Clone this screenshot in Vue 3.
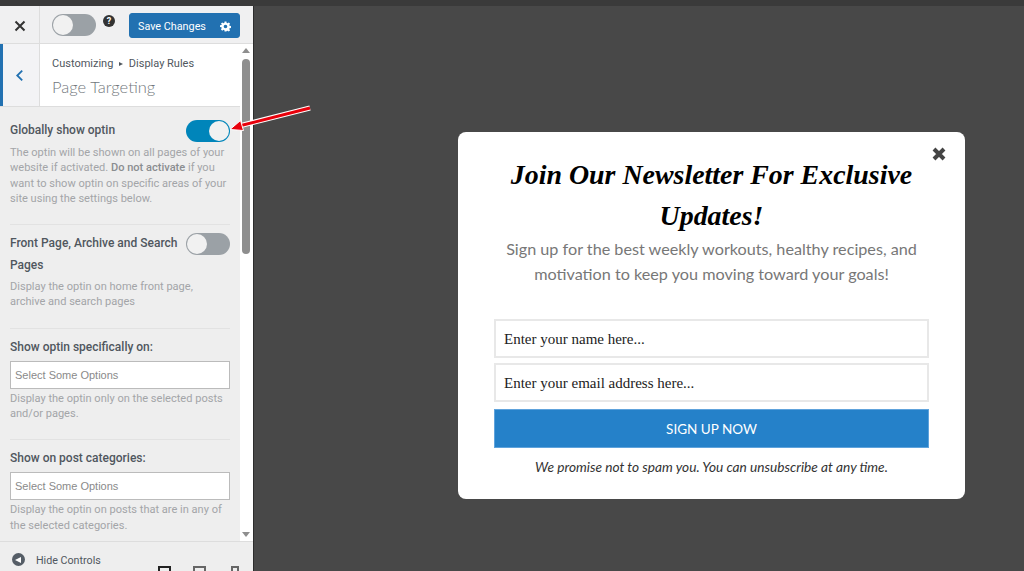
<script setup>
const rules = [
  {
    label: "Globally show optin",
    toggle: "on",
    desc: 'The optin will be shown on all pages of your website if activated. <b>Do not activate</b> if you want to show optin on specific areas of your site using the settings below.'
  },
  {
    label: "Front Page, Archive and Search Pages",
    toggle: "off",
    desc: "Display the optin on home front page, archive and search pages",
    pad: true
  },
  {
    label: "Show optin specifically on:",
    select: true,
    desc: "Display the optin only on the selected posts and/or pages."
  },
  {
    label: "Show on post categories:",
    select: true,
    desc: "Display the optin on posts that are in any of the selected categories."
  }
];
</script>

<template>
  <div class="page">
    <div class="topbar"></div>
    <div class="body">
      <aside class="sidebar">
        <header class="actions">
          <div class="close">
            <svg width="12" height="12" viewBox="0 0 12 12"><path d="M1.500 1.500l9 9M10.500 1.500l-9 9" stroke="#333" stroke-width="2" fill="none" /></svg>
          </div>
          <div class="toggle off small"><span class="knob"></span></div>
          <div class="help">?</div>
          <button class="save">
            <span>Save Changes</span>
            <svg width="11" height="11" viewBox="0 0 24 24"><path fill="#fff" fill-rule="evenodd" d="M10 1h4l.6 3.100 1.900.8L19.200 3 22 5.800l-1.900 2.700.8 1.900 3.100.6v4l-3.100.6-.8 1.900 1.900 2.700-2.800 2.800-2.700-1.900-1.900.8L14 23h-4l-.6-3.100-1.900-.8L4.800 21 2 18.200l1.900-2.700-.8-1.900L0 13V9.500l3.100-.6.8-1.900L2 5.800 4.800 3l2.700 1.900 1.900-.8zM12 8a4 4 0 100 8 4 4 0 000-8z"/></svg>
          </button>
        </header>

        <div class="middle">
          <div class="column">
            <div class="panel-title">
              <div class="back">
                <svg width="9" height="13" viewBox="0 0 10 14"><path d="M8 1.500L2.500 7 8 12.500" stroke="#2271b1" stroke-width="2" fill="none" /></svg>
              </div>
              <div class="crumbs">
                <div class="crumb">Customizing <i class="tri"></i> Display Rules</div>
                <div class="title">Page Targeting</div>
              </div>
            </div>
            <div class="rules">
              <section v-for="rule in rules" :key="rule.label" class="rule" :class="{ padded: rule.pad, 'with-select': rule.select }">
                <div class="label-row">
                  <div v-if="rule.toggle" class="toggle" :class="rule.toggle"><span class="knob"></span></div>
                  <span class="label">{{ rule.label }}</span>
                </div>
                <div v-if="rule.select" class="select">Select Some Options</div>
                <p class="desc" v-html="rule.desc"></p>
              </section>
            </div>
          </div>
          <div class="scrollbar">
            <i class="arrow up"></i>
            <div class="thumb"></div>
            <i class="arrow down"></i>
          </div>
        </div>

        <footer class="controls">
          <span class="hide-icon"><i></i></span>
          <span class="hide-text">Hide Controls</span>
          <div class="devices">
            <i class="device active"></i>
            <i class="device"></i>
            <i class="device narrow"></i>
          </div>
        </footer>
      </aside>

      <main class="stage">
        <div class="popup">
          <svg class="popup-close" width="16" height="16" viewBox="0 0 16 16"><path d="M3 3l10 10M13 3L3 13" stroke="#444" stroke-width="4" fill="none" /></svg>
          <h1>Join Our Newsletter For Exclusive Updates!</h1>
          <p class="sub">Sign up for the best weekly workouts, healthy recipes, and motivation to keep you moving toward your goals!</p>
          <div class="field">Enter your name here...</div>
          <div class="field">Enter your email address here...</div>
          <button class="signup">SIGN UP NOW</button>
          <p class="note">We promise not to spam you. You can unsubscribe at any time.</p>
        </div>
      </main>
    </div>

    <svg class="pointer" width="90" height="32" viewBox="0 0 90 32">
      <path d="M84 3L13 21" stroke="#fff" stroke-width="5" fill="none" />
      <path d="M84 3L13 21" stroke="#e8000b" stroke-width="3" fill="none" />
      <path d="M4 24.500L14.500 15.500l3 10z" fill="#e8000b" stroke="#fff" stroke-width="1" />
    </svg>
  </div>
</template>

<style>
html, body {
  margin: 0;
  overflow: hidden;
}
</style>

<style scoped>
.page {
  position: relative;
  width: 1024px;
  height: 571px;
  overflow: hidden;
  background: #484848;
  font-family: Roboto, sans-serif;
}
.topbar {
  height: 6px;
  background: #3a3a3a;
}
.body {
  display: flex;
  height: 565px;
}
.sidebar {
  width: 253px;
  flex: none;
  display: flex;
  flex-direction: column;
  background: #eee;
  border-right: 1px solid #2c2c2c;
  overflow: hidden;
}
.actions {
  height: 38px;
  flex: none;
  display: flex;
  align-items: flex-start;
  box-sizing: border-box;
  border-bottom: 1px solid #ddd;
  background: #f0f0f1;
}
.close {
  width: 40px;
  height: 37px;
  flex: none;
  display: flex;
  align-items: center;
  justify-content: center;
  border-right: 1px solid #ddd;
  box-sizing: border-box;
  padding-top: 2px;
}
.toggle {
  width: 44px;
  height: 22px;
  flex: none;
  box-sizing: border-box;
  border-radius: 11px;
  display: flex;
  align-items: center;
  padding: 0 1px;
}
.toggle.on {
  background: #0085ba;
  justify-content: flex-end;
}
.toggle.off {
  background: #9ba1a6;
}
.toggle .knob {
  width: 20px;
  height: 20px;
  border-radius: 50%;
  background: #f1f1f1;
}
.toggle.small {
  margin: 8px 0 0 12px;
}
.help {
  width: 12px;
  height: 12px;
  flex: none;
  margin: 9px 0 0 7px;
  border-radius: 50%;
  background: #333;
  color: #fff;
  font-size: 9px;
  font-weight: 700;
  line-height: 12px;
  text-align: center;
}
.save {
  width: 111px;
  height: 25px;
  margin: 7px 0 0 14px;
  padding: 2px 8px 0 8px;
  display: flex;
  align-items: center;
  justify-content: space-between;
  border: 1px solid #2271b1;
  border-radius: 3px;
  background: #2271b1;
  color: #fff;
  font-family: Roboto, sans-serif;
  font-size: 10.800px;
  box-sizing: border-box;
}
.middle {
  flex: 1;
  min-height: 0;
  display: flex;
  overflow: hidden;
}
.column {
  width: 240px;
  flex: none;
  overflow: hidden;
}
.panel-title {
  height: 63px;
  display: flex;
  background: #fff;
  border-bottom: 1px solid #ddd;
  box-sizing: border-box;
}
.back {
  width: 40px;
  flex: none;
  display: flex;
  align-items: center;
  justify-content: center;
  box-sizing: border-box;
  padding-right: 3px;
  border-left: 3px solid #2271b1;
  border-right: 1px solid #ddd;
  background: #f3f3f5;
}
.crumbs {
  padding: 10px 0 0 12px;
}
.crumb {
  color: #50575e;
  font-size: 11px;
  line-height: 20px;
}
.tri {
  display: inline-block;
  margin: 0 3px 1px;
  border-left: 4px solid #50575e;
  border-top: 2.500px solid transparent;
  border-bottom: 2.500px solid transparent;
}
.title {
  color: #72777c;
  font-family: Lato, sans-serif;
  font-size: 16.500px;
  font-weight: 300;
  line-height: 26px;
}
.rules {
  padding: 13px 10px 0;
}
.rule {
  padding-bottom: 18px;
  margin-bottom: 8px;
  border-bottom: 1px solid #e2e2e2;
}
.rule:last-child {
  border-bottom: none;
}
.label-row {
  margin-top: -1px;
  color: #50575e;
  font-size: 12px;
  font-weight: 500;
  line-height: 22px;
}
.label-row .toggle {
  float: right;
  margin: 1px 0 0 2px;
}
.select {
  height: 28px;
  box-sizing: border-box;
  margin-top: 3px;
  padding-left: 4px;
  border: 1px solid #bbb;
  background: #fff;
  color: #8a8a8a;
  font-family: "Liberation Sans", sans-serif;
  font-size: 11px;
  line-height: 26px;
}
.desc {
  margin: 4px 0 0;
  color: #a3a5a8;
  font-size: 11.050px;
  line-height: 15.300px;
}
.padded .desc {
  margin-top: 3px;
}
.with-select .desc {
  margin-top: 2px;
}
.desc :deep(b) {
  font-weight: 500;
  color: #8a8d90;
}
.scrollbar {
  position: relative;
  width: 13px;
  flex: none;
  background: #fff;
}
.thumb {
  width: 8px;
  height: 195px;
  margin: 15px 0 0 2px;
  border-radius: 4px;
  background: #8e8e8e;
}
.arrow {
  position: absolute;
  left: 2px;
  border-left: 4px solid transparent;
  border-right: 4px solid transparent;
}
.arrow.up {
  top: 4px;
  border-bottom: 5px solid #8e8e8e;
}
.arrow.down {
  bottom: 4px;
  border-top: 5px solid #8e8e8e;
}
.controls {
  height: 30px;
  flex: none;
  position: relative;
  border-top: 1px solid #ddd;
  box-sizing: border-box;
  display: flex;
  align-items: flex-start;
  padding: 11px 0 0 12px;
  overflow: hidden;
}
.hide-icon {
  width: 13px;
  height: 13px;
  border-radius: 50%;
  background: #555d66;
  display: flex;
  align-items: center;
  justify-content: center;
}
.hide-icon i {
  border-right: 6px solid #fff;
  border-top: 3.500px solid transparent;
  border-bottom: 3.500px solid transparent;
  margin-right: 2px;
}
.hide-text {
  margin-left: 11px;
  color: #50575e;
  font-size: 10.700px;
  line-height: 16px;
}
.devices {
  position: absolute;
  left: 158px;
  top: 24px;
  display: flex;
  gap: 22px;
}
.device {
  width: 13px;
  height: 10px;
  box-sizing: border-box;
  border: 2px solid #666;
}
.device.active {
  border-color: #222;
}
.device.narrow {
  width: 8px;
  margin-left: 3px;
}
.stage {
  flex: 1;
  display: flex;
  align-items: flex-start;
  padding: 126px 0 0 204px;
}
.popup {
  position: relative;
  width: 507px;
  height: 367px;
  box-sizing: border-box;
  padding: 22px 36px 0;
  background: #fff;
  border-radius: 8px;
  text-align: center;
}
.popup-close {
  position: absolute;
  top: 14px;
  right: 18px;
}
h1 {
  margin: 0;
  color: #000;
  font-family: "Liberation Serif", serif;
  font-size: 27.900px;
  font-style: italic;
  font-weight: 700;
  line-height: 41px;
}
.sub {
  margin: 0 0 33px;
  color: #777;
  font-family: Lato, sans-serif;
  font-size: 16.200px;
  line-height: 25px;
}
.field {
  height: 39px;
  box-sizing: border-box;
  margin-bottom: 5px;
  padding-left: 8px;
  border: 2px solid #e8e8e8;
  color: #222;
  font-family: "Liberation Serif", serif;
  font-size: 15px;
  line-height: 37px;
  text-align: left;
}
.signup {
  display: block;
  width: 100%;
  height: 39px;
  margin-top: 7px;
  border: 1px solid #5fa3dc;
  background: #2581c9;
  color: #fff;
  font-family: Lato, sans-serif;
  font-size: 13.500px;
}
.note {
  margin: 10px 0 0;
  color: #333;
  font-family: Lato, sans-serif;
  font-size: 13.700px;
  font-style: italic;
  line-height: 18px;
}
.pointer {
  position: absolute;
  left: 226px;
  top: 105px;
}
</style>
